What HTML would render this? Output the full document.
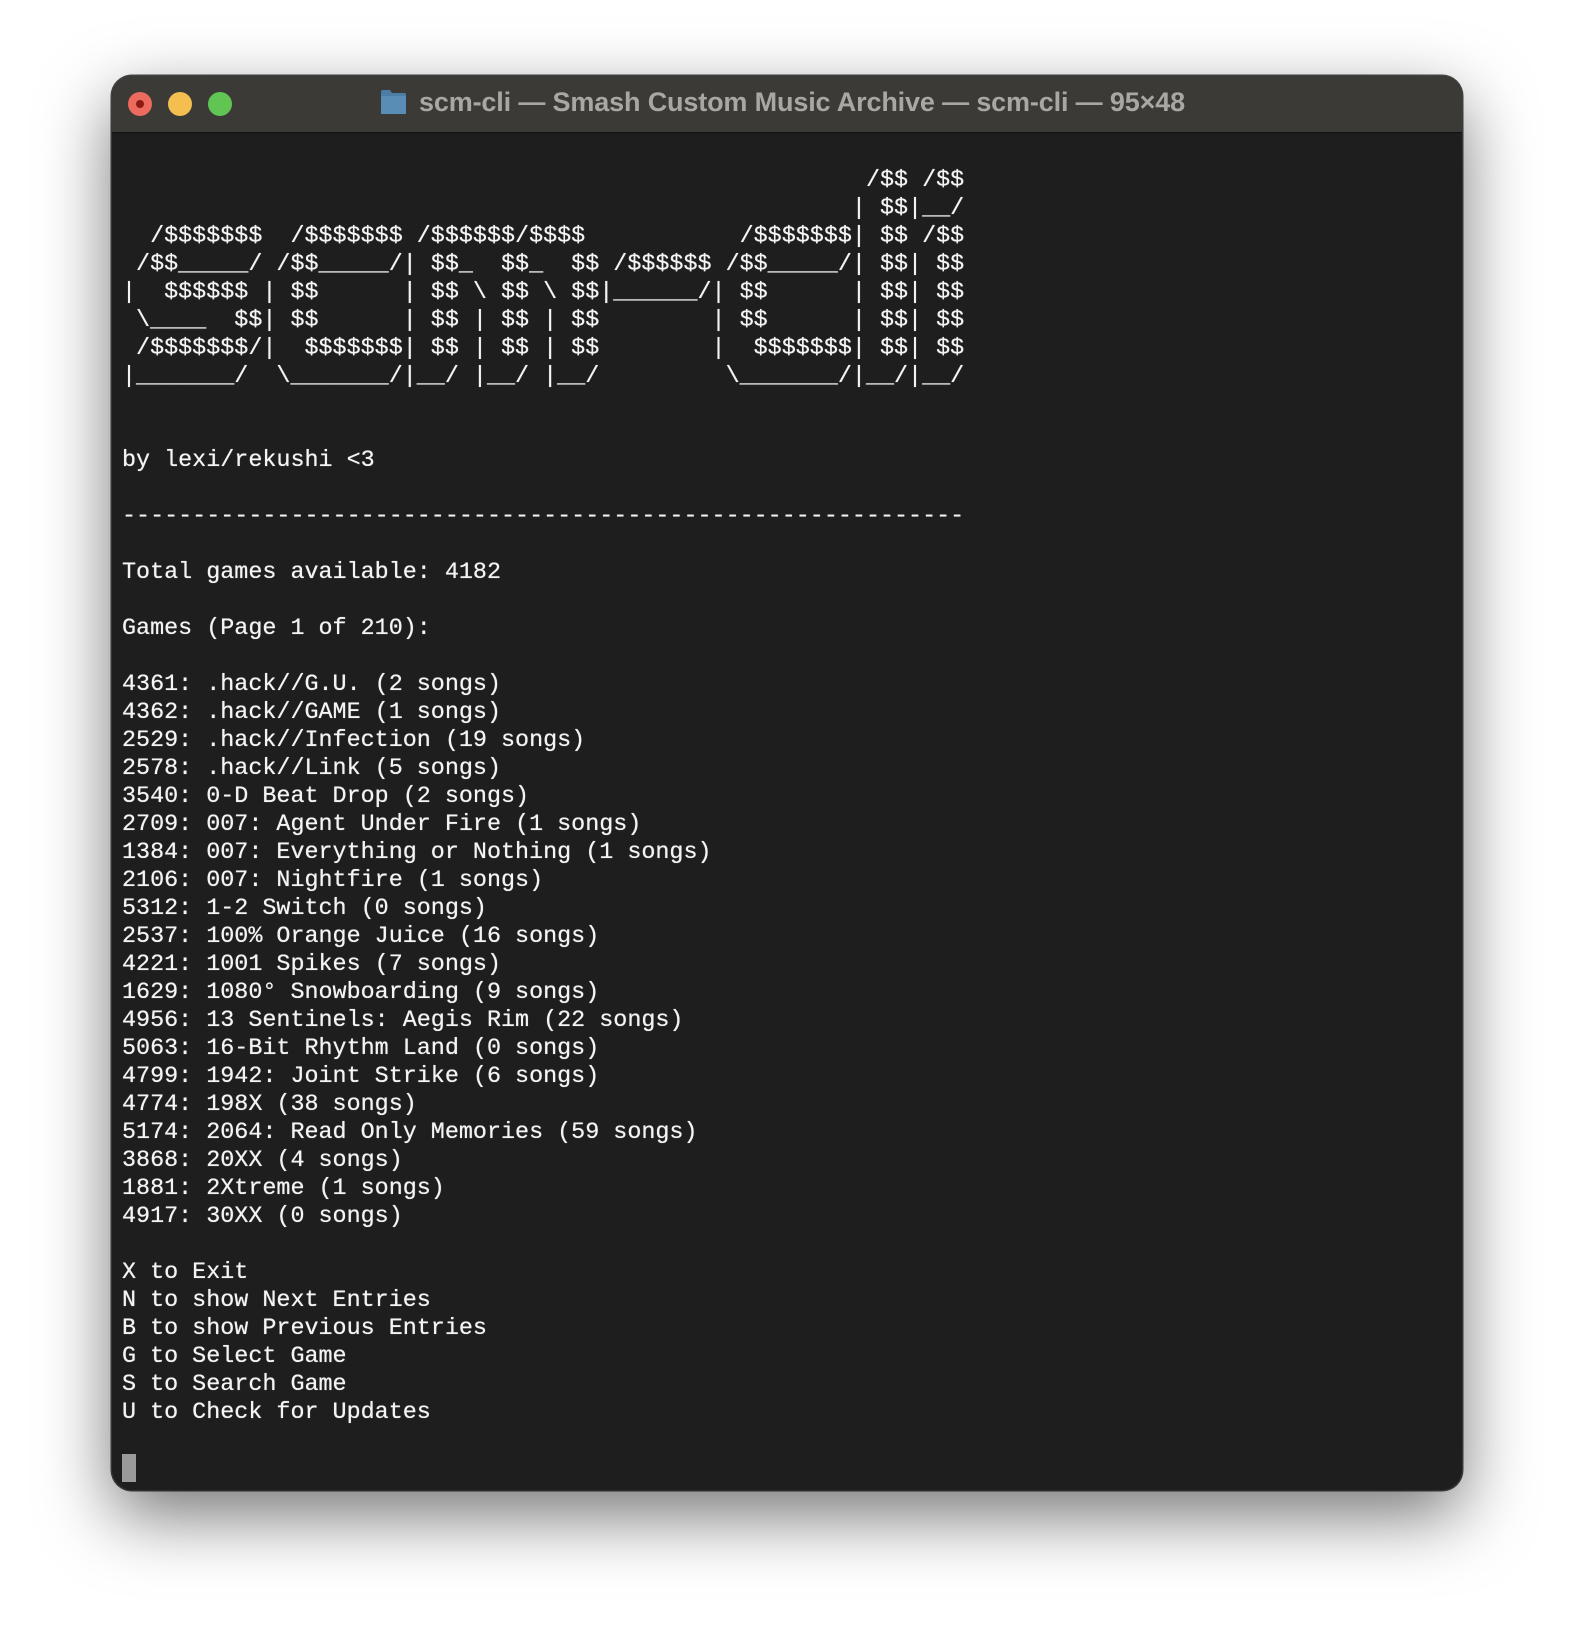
<!DOCTYPE html>
<html><head><meta charset="utf-8"><style>
html,body{margin:0;padding:0;background:#fff;width:1574px;height:1638px;overflow:hidden}
.win{position:absolute;left:112px;top:76px;width:1350px;height:1414px;border-radius:20px;background:#1e1e1e;box-shadow:0 25px 70px rgba(0,0,0,0.55),0 0 0 1.5px #4a4a48;overflow:hidden}
.tb{position:absolute;left:0;top:0;right:0;height:56px;background:#3b3a37;border-bottom:1.5px solid #111}
.dot{position:absolute;top:16px;width:24px;height:24px;border-radius:50%}
.title{position:absolute;left:307px;top:11px;font:bold 27px "Liberation Sans",sans-serif;color:#a8a7a4;white-space:nowrap;letter-spacing:-0.15px}
.folder{position:absolute;left:268px;top:13px;width:27px;height:26px}
pre{position:absolute;left:10px;top:91px;margin:0;font-family:"Liberation Mono",monospace;font-size:23.4px;line-height:28px;color:#f4f4f4;text-shadow:0 0 0.6px #fff}
.cur{position:absolute;left:10px;top:1378px;width:14px;height:28px;background:#9a9a9a}
</style></head><body>
<div class="win">
<div class="tb">
<div class="dot" style="left:16px;background:#ec6a5e"><div style="position:absolute;left:8px;top:8px;width:8px;height:8px;border-radius:50%;background:#8b1a10"></div></div>
<div class="dot" style="left:56px;background:#f4bf4f"></div>
<div class="dot" style="left:96px;background:#61c554"></div>
<svg class="folder" viewBox="0 0 27 26"><path d="M1 3 Q1 1 3 1 H10 L12 4 H25 Q26 4 26 6 V24 Q26 25 25 25 H2 Q1 25 1 24 Z" fill="#4a7ea6"/><rect x="1" y="7" width="25" height="18" rx="1" fill="#5a8db5"/></svg>
<div class="title">scm-cli — Smash Custom Music Archive — scm-cli — 95×48</div>
</div>
<pre>                                                     /$$ /$$
                                                    | $$|__/
  /$$$$$$$  /$$$$$$$ /$$$$$$/$$$$           /$$$$$$$| $$ /$$
 /$$_____/ /$$_____/| $$_  $$_  $$ /$$$$$$ /$$_____/| $$| $$
|  $$$$$$ | $$      | $$ \ $$ \ $$|______/| $$      | $$| $$
 \____  $$| $$      | $$ | $$ | $$        | $$      | $$| $$
 /$$$$$$$/|  $$$$$$$| $$ | $$ | $$        |  $$$$$$$| $$| $$
|_______/  \_______/|__/ |__/ |__/         \_______/|__/|__/


by lexi/rekushi &lt;3

------------------------------------------------------------

Total games available: 4182

Games (Page 1 of 210):

4361: .hack//G.U. (2 songs)
4362: .hack//GAME (1 songs)
2529: .hack//Infection (19 songs)
2578: .hack//Link (5 songs)
3540: 0-D Beat Drop (2 songs)
2709: 007: Agent Under Fire (1 songs)
1384: 007: Everything or Nothing (1 songs)
2106: 007: Nightfire (1 songs)
5312: 1-2 Switch (0 songs)
2537: 100% Orange Juice (16 songs)
4221: 1001 Spikes (7 songs)
1629: 1080° Snowboarding (9 songs)
4956: 13 Sentinels: Aegis Rim (22 songs)
5063: 16-Bit Rhythm Land (0 songs)
4799: 1942: Joint Strike (6 songs)
4774: 198X (38 songs)
5174: 2064: Read Only Memories (59 songs)
3868: 20XX (4 songs)
1881: 2Xtreme (1 songs)
4917: 30XX (0 songs)

X to Exit
N to show Next Entries
B to show Previous Entries
G to Select Game
S to Search Game
U to Check for Updates</pre>
<div class="cur"></div>
</div>
</body></html>
